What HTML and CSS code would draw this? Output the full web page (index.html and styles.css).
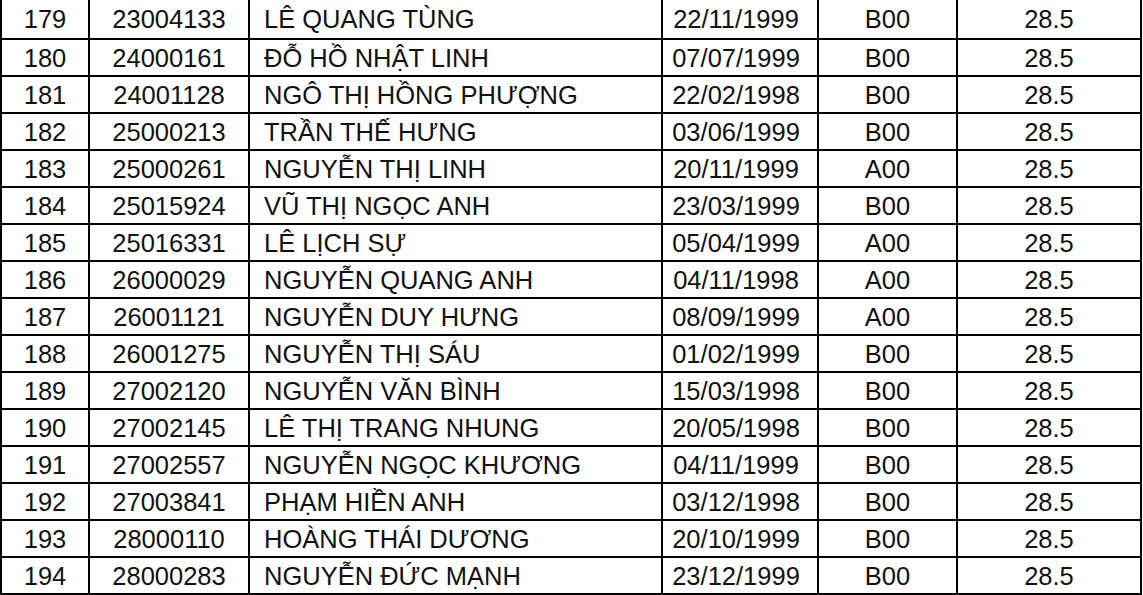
FILE: index.html
```html
<!DOCTYPE html>
<html lang="vi">
<head>
<meta charset="utf-8">
<title>Danh sách</title>
<link rel="stylesheet" href="styles.css">
</head>
<body>
<table class="list">
  <colgroup>
    <col class="c-stt"><col class="c-sbd"><col class="c-name"><col class="c-dob"><col class="c-khoi"><col class="c-diem">
  </colgroup>
  <tbody>
    <tr><td>179</td><td>23004133</td><td class="name">LÊ QUANG TÙNG</td><td class="dob">22/11/1999</td><td>B00</td><td>28.5</td></tr>
    <tr><td>180</td><td>24000161</td><td class="name">ĐỖ HỒ NHẬT LINH</td><td class="dob">07/07/1999</td><td>B00</td><td>28.5</td></tr>
    <tr><td>181</td><td>24001128</td><td class="name">NGÔ THỊ HỒNG PHƯỢNG</td><td class="dob">22/02/1998</td><td>B00</td><td>28.5</td></tr>
    <tr><td>182</td><td>25000213</td><td class="name">TRẦN THẾ HƯNG</td><td class="dob">03/06/1999</td><td>B00</td><td>28.5</td></tr>
    <tr><td>183</td><td>25000261</td><td class="name">NGUYỄN THỊ LINH</td><td class="dob">20/11/1999</td><td>A00</td><td>28.5</td></tr>
    <tr><td>184</td><td>25015924</td><td class="name">VŨ THỊ NGỌC ANH</td><td class="dob">23/03/1999</td><td>B00</td><td>28.5</td></tr>
    <tr><td>185</td><td>25016331</td><td class="name">LÊ LỊCH SỰ</td><td class="dob">05/04/1999</td><td>A00</td><td>28.5</td></tr>
    <tr><td>186</td><td>26000029</td><td class="name">NGUYỄN QUANG ANH</td><td class="dob">04/11/1998</td><td>A00</td><td>28.5</td></tr>
    <tr><td>187</td><td>26001121</td><td class="name">NGUYỄN DUY HƯNG</td><td class="dob">08/09/1999</td><td>A00</td><td>28.5</td></tr>
    <tr><td>188</td><td>26001275</td><td class="name">NGUYỄN THỊ SÁU</td><td class="dob">01/02/1999</td><td>B00</td><td>28.5</td></tr>
    <tr><td>189</td><td>27002120</td><td class="name">NGUYỄN VĂN BÌNH</td><td class="dob">15/03/1998</td><td>B00</td><td>28.5</td></tr>
    <tr><td>190</td><td>27002145</td><td class="name">LÊ THỊ TRANG NHUNG</td><td class="dob">20/05/1998</td><td>B00</td><td>28.5</td></tr>
    <tr><td>191</td><td>27002557</td><td class="name">NGUYỄN NGỌC KHƯƠNG</td><td class="dob">04/11/1999</td><td>B00</td><td>28.5</td></tr>
    <tr><td>192</td><td>27003841</td><td class="name">PHẠM HIỀN ANH</td><td class="dob">03/12/1998</td><td>B00</td><td>28.5</td></tr>
    <tr><td>193</td><td>28000110</td><td class="name">HOÀNG THÁI DƯƠNG</td><td class="dob">20/10/1999</td><td>B00</td><td>28.5</td></tr>
    <tr><td>194</td><td>28000283</td><td class="name">NGUYỄN ĐỨC MẠNH</td><td class="dob">23/12/1999</td><td>B00</td><td>28.5</td></tr>
  </tbody>
</table>
</body>
</html>
```
FILE: styles.css
```css
html, body {
  margin: 0;
  padding: 0;
  background: #fff;
}
body {
  font-family: "Liberation Sans", Arial, sans-serif;
  color: #111;
  overflow: hidden;
}
.list {
  border-collapse: collapse;
  table-layout: fixed;
  width: 1142px;
  border: 2px solid #000;
  border-top: none;
}
.c-stt { width: 88px; }
.c-sbd { width: 160px; }
.c-name { width: 413px; }
.c-dob { width: 156px; }
.c-khoi { width: 139px; }
.c-diem { width: 184px; }
.list td {
  border: 2px solid #000;
  height: 35px;
  padding: 0;
  font-size: 25.5px;
  line-height: 28px;
  text-align: center;
  vertical-align: middle;
  white-space: nowrap;
}
.list tr:first-child td {
  border-top: none;
  height: 38px;
}
.list td.name {
  text-align: left;
  padding-left: 14px;
}
.list td.dob {
  padding-right: 8px;
}
```
